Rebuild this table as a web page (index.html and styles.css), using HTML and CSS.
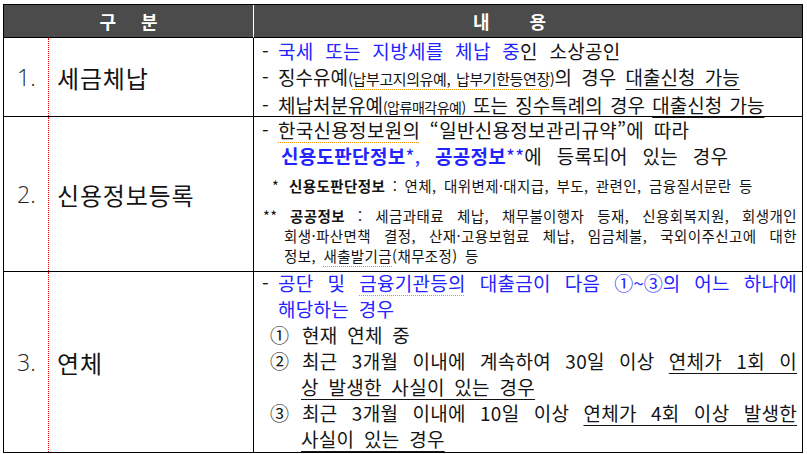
FILE: index.html
```html
<!DOCTYPE html>
<html lang="ko">
<head>
<meta charset="utf-8">
<title>대출 제한 대상</title>
<link rel="stylesheet" href="styles.css">
</head>
<body>
<div class="sheet">
  <div class="hcell hleft">구 분</div>
  <div class="hcell hright">내 용</div>

  <div class="lcell"><div class="num">1.</div><div class="name">세금체납</div></div>
  <div class="rcell r1">
    <div class="ln wide"><span class="dash">-</span><span class="blue">국세 또는 지방세를 체납 중</span>인 소상공인</div>
    <div class="ln tight1"><span class="dash">-</span>징수유예<span class="sm">(<span class="sq">납부고지의유예, 납부기한등연장</span>)</span>의 경우 <u>대출신청 가능</u></div>
    <div class="ln tight2"><span class="dash">-</span>체납처분유예<span class="sm sm2">(압류매각유예)</span> 또는 징수특례의 경우 <u>대출신청 가능</u></div>
  </div>

  <div class="lcell"><div class="num">2.</div><div class="name">신용정보등록</div></div>
  <div class="rcell r2">
    <div class="ln"><span class="dash">-</span><span class="sq">한국신용정보원의</span> “일반신용정보관리규약”에 따라</div>
    <div class="ln ind2 spread"><span class="blue"><b>신용도판단정보</b>*, <b>공공정보</b>**</span>에 등록되어 있는 경우</div>
    <div class="small s1"><span class="st1">*</span><b>신용도판단정보</b> : 연체, 대위변제·대지급, 부도, 관련인, 금융질서문란 등</div>
    <div class="small s2 jl"><span class="st2">**</span><b>공공정보</b> : 세금과태료 체납, 채무불이행자 등재, 신용회복지원, 회생개인</div>
    <div class="small s3 jl">회생·파산면책 결정, 산재·고용보험료 체납, 임금체불, 국외이주신고에 대한</div>
    <div class="small s3">정보, <span class="sq">새출발기금</span>(채무조정) 등</div>
  </div>

  <div class="lcell last"><div class="num">3.</div><div class="name">연체</div></div>
  <div class="rcell r3 last">
    <div class="inner">
      <div class="ln jl blue"><span class="dash">-</span>공단 및 <span class="sq">금융기관등의</span> 대출금이 다음 <span class="nb">①~③의</span> 어느 하나에</div>
      <div class="ln ind blue">해당하는 경우</div>
      <div class="ln cl"><span class="cn">①</span>현재 연체 중</div>
      <div class="ln cl jl"><span class="cn">②</span>최근 3개월 이내에 계속하여 30일 이상 <u>연체가 1회 이</u></div>
      <div class="ln cl2"><u>상 발생한 사실이 있는 경우</u></div>
      <div class="ln cl jl"><span class="cn">③</span>최근 3개월 이내에 10일 이상 <u>연체가 4회 이상 발생한</u></div>
      <div class="ln cl2"><u>사실이 있는 경우</u></div>
    </div>
  </div>
</div>
</body>
</html>
```

FILE: styles.css
```css
body {
  margin: 0;
  background: #ffffff;
  font-family: "Noto Sans CJK KR", "Noto Sans", sans-serif;
  color: #141414;
}

.sheet {
  display: grid;
  grid-template-columns: 250px 548px;
  grid-template-rows: 33px 79px 155px 180px;
  margin: 4px 0 0 3px;
  width: max-content;
  border: 1px solid #000;
}

.hcell {
  box-sizing: border-box;
  display: flex;
  align-items: center;
  justify-content: center;
  background: #4b4b4b;
  color: #ffffff;
  font-weight: 700;
  font-size: 18px;
  border-bottom: 1px solid #000;
}

.hleft {
  border-right: 1px solid #ffffff;
  word-spacing: 20px;
}

.hright {
  padding-right: 37px;
  word-spacing: 35px;
}

.lcell {
  box-sizing: border-box;
  display: flex;
  border-right: 1px solid #000;
  border-bottom: 1px solid #000;
}

.lcell.last,
.rcell.last {
  border-bottom: 0;
}

.num {
  box-sizing: border-box;
  width: 44px;
  padding-left: 13px;
  display: flex;
  align-items: center;
  font-family: "Open Sans", "Noto Sans", sans-serif;
  font-weight: 300;
  font-size: 23px;
  color: #222222;
}

.name {
  flex: 1;
  border-left: 1px dotted #ff0000;
  padding-left: 8px;
  display: flex;
  align-items: center;
  font-size: 24px;
  letter-spacing: 0.8px;
}

.rcell {
  box-sizing: border-box;
  padding: 0 5px 0 8px;
  font-size: 19px;
  line-height: 26px;
  letter-spacing: 0.3px;
  word-spacing: 4px;
  border-bottom: 1px solid #000;
}

.r3 .inner {
  margin-top: -2px;
}

.ln {
  white-space: nowrap;
}

.wide {
  word-spacing: 6px;
}

.tight1 {
  letter-spacing: 0;
}

.tight2 {
  letter-spacing: 0;
  word-spacing: 2px;
}

.spread {
  word-spacing: 9px;
}

.jl {
  white-space: normal;
  text-align: justify;
  text-align-last: justify;
}

.nb {
  display: inline-block;
  letter-spacing: 0;
}

.blue {
  color: #2323ff;
}

.dash {
  display: inline-block;
  width: 16px;
  color: #141414;
}

.ind {
  padding-left: 16px;
}

.ind2 {
  padding-left: 19px;
}

.cl {
  padding-left: 8px;
}

.cn {
  display: inline-block;
  width: 32px;
}

.cl2 {
  padding-left: 39px;
}

.sm {
  font-size: 15px;
  letter-spacing: -0.4px;
  word-spacing: 2px;
}

.sm2 {
  font-size: 14px;
  letter-spacing: -0.5px;
}

u {
  text-decoration: underline;
  text-decoration-thickness: 1px;
  text-underline-offset: 4px;
  text-decoration-color: #141414;
}

.sq {
  text-decoration: underline dotted #f29100;
  text-decoration-thickness: 1px;
  text-underline-offset: 4px;
}

.small {
  font-size: 14.5px;
  line-height: 20px;
  letter-spacing: 0.4px;
  word-spacing: 3px;
  white-space: nowrap;
}

.small.jl {
  white-space: normal;
}

.s1 {
  margin-top: 7px;
  padding-left: 10px;
}

.st1 {
  display: inline-block;
  width: 17px;
}

.s2 {
  margin-top: 10px;
  padding-left: 1px;
}

.st2 {
  display: inline-block;
  width: 27px;
}

.s3 {
  padding-left: 22px;
}
```
